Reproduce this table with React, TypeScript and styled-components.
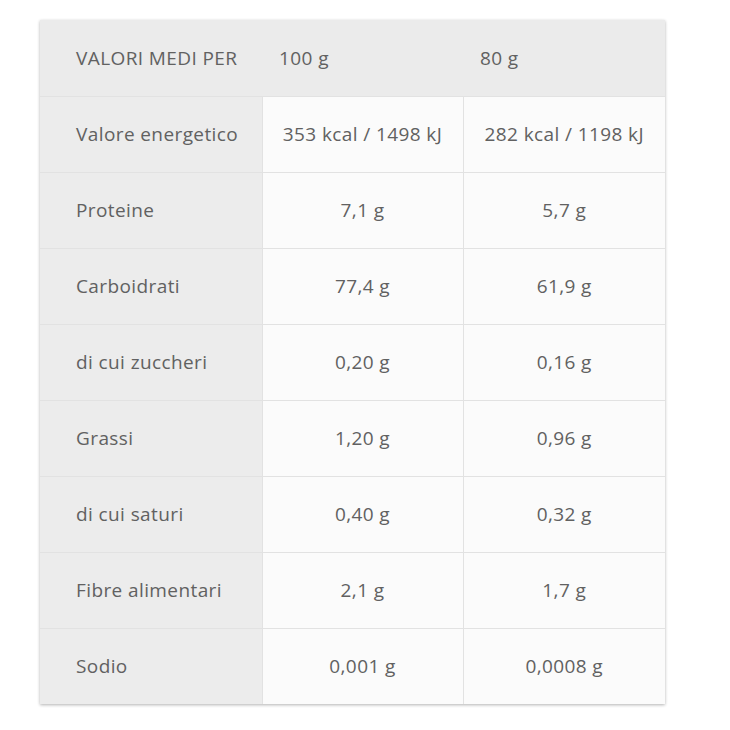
import React from 'react'
import styled, { createGlobalStyle } from 'styled-components'

const GlobalStyle = createGlobalStyle`
  html, body {
    margin: 0;
    padding: 0;
    background: #ffffff;
  }
  body {
    font-family: "Open Sans", "Liberation Sans", sans-serif;
  }
`

const Page = styled.div`
  padding: 20px 0 30px 40px;
`

const Card = styled.div`
  width: 625px;
  box-shadow: 0 1px 3px rgba(0,0,0,0.3);
`

const Table = styled.table`
  width: 100%;
  border-collapse: collapse;
  table-layout: fixed;
  font-size: 19px;
  letter-spacing: 0.4px;
  color: #616161;
`

const HeadRow = styled.tr`
  height: 76px;
  background: #ebebeb;
`

const HeadCell = styled.th<{ $pad: number }>`
  text-align: left;
  font-weight: normal;
  padding: 0 0 0 ${p => p.$pad}px;
  border-bottom: 1px solid #e2e2e2;
`

const Row = styled.tr`
  height: 76px;
`

const LabelCell = styled.td`
  background: #ececec;
  padding: 0 0 0 36px;
  border-top: 1px solid #e2e2e2;
  border-right: 1px solid #e2e2e2;
  white-space: nowrap;
`

const ValueCell = styled.td`
  background: #fbfbfb;
  text-align: center;
  border-top: 1px solid #e2e2e2;
  border-right: 1px solid #e2e2e2;
  white-space: nowrap;
  &:last-child {
    border-right: none;
  }
`

const rows: [string, string, string][] = [
  ['Valore energetico', '353 kcal / 1498 kJ', '282 kcal / 1198 kJ'],
  ['Proteine', '7,1 g', '5,7 g'],
  ['Carboidrati', '77,4 g', '61,9 g'],
  ['di cui zuccheri', '0,20 g', '0,16 g'],
  ['Grassi', '1,20 g', '0,96 g'],
  ['di cui saturi', '0,40 g', '0,32 g'],
  ['Fibre alimentari', '2,1 g', '1,7 g'],
  ['Sodio', '0,001 g', '0,0008 g'],
]

export default function App() {
  return (
    <Page>
      <GlobalStyle />
      <Card>
        <Table>
          <colgroup>
            <col style={{ width: 222 }} />
            <col style={{ width: 201 }} />
            <col style={{ width: 202 }} />
          </colgroup>
          <thead>
            <HeadRow>
              <HeadCell $pad={36}>VALORI MEDI PER</HeadCell>
              <HeadCell $pad={17}>100 g</HeadCell>
              <HeadCell $pad={17}>80 g</HeadCell>
            </HeadRow>
          </thead>
          <tbody>
            {rows.map(([label, a, b]) => (
              <Row key={label}>
                <LabelCell>{label}</LabelCell>
                <ValueCell>{a}</ValueCell>
                <ValueCell>{b}</ValueCell>
              </Row>
            ))}
          </tbody>
        </Table>
      </Card>
    </Page>
  )
}
